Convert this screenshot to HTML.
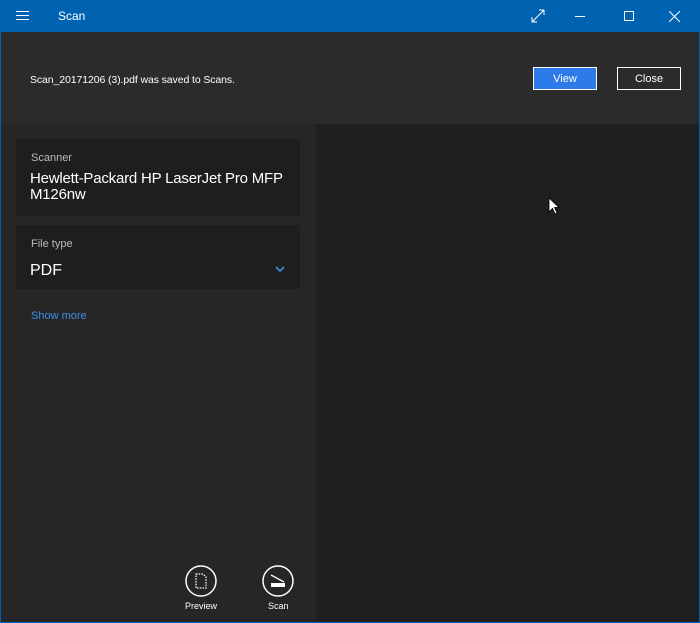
<!DOCTYPE html>
<html><head><style>
*{margin:0;padding:0;box-sizing:border-box}
body{width:700px;height:623px;overflow:hidden;background:#0063b1;font-family:"Liberation Sans",sans-serif;position:relative}
.t{position:absolute;color:#fff;white-space:nowrap;line-height:1.2}
</style></head><body>
<div style="position:absolute;left:0;top:0;width:700px;height:32px;background:#0063b1"></div>
<svg style="position:absolute;left:16px;top:10px" width="14" height="12"><path d="M0 1.5H13M0 5.5H13M0 9.5H13" stroke="#fff" stroke-width="1"/></svg>
<div class="t" style="left:58px;top:9px;font-size:12px">Scan</div>
<svg style="position:absolute;left:530px;top:8px" width="16" height="16"><path d="M2 14L14 2M2 14V9M2 14H7M14 2H9M14 2V7" stroke="#fff" stroke-width="1" fill="none"/></svg>
<div style="position:absolute;left:575px;top:16px;width:10px;height:1px;background:#fff"></div>
<div style="position:absolute;left:624px;top:11px;width:10px;height:10px;border:1px solid #fff"></div>
<svg style="position:absolute;left:669px;top:11px" width="11" height="11"><path d="M0 0L11 11M11 0L0 11" stroke="#fff" stroke-width="1"/></svg>
<div style="position:absolute;left:1px;top:32px;width:698px;height:590px;background:#1f1f1f"></div>
<div style="position:absolute;left:1px;top:32px;width:698px;height:92px;background:#2b2b2b"></div>
<div class="t" style="left:30px;top:74px;font-size:10.5px;letter-spacing:-0.1px">Scan_20171206 (3).pdf was saved to Scans.</div>
<div style="position:absolute;left:533px;top:67px;width:64px;height:23px;background:#2d7be8;border:1px solid #fff;color:#fff;font-size:11px;text-align:center;line-height:22px">View</div>
<div style="position:absolute;left:617px;top:67px;width:64px;height:23px;background:#2b2b2b;border:1px solid #fff;color:#fff;font-size:11px;text-align:center;line-height:22px">Close</div>
<div style="position:absolute;left:1px;top:124px;width:315px;height:498px;background:#262626"></div>
<div style="position:absolute;left:16px;top:139px;width:284px;height:77px;background:#1e1e1e"></div>
<div class="t" style="left:31px;top:152px;font-size:11px;color:#bbb">Scanner</div>
<div class="t" style="left:30px;top:171px;font-size:15px;line-height:16px;letter-spacing:-0.2px">Hewlett-Packard HP LaserJet Pro MFP<br>M126nw</div>
<div style="position:absolute;left:16px;top:225px;width:284px;height:64px;background:#1e1e1e"></div>
<div class="t" style="left:31px;top:238px;font-size:11px;color:#bbb">File type</div>
<div class="t" style="left:30px;top:261px;font-size:16px">PDF</div>
<svg style="position:absolute;left:275px;top:266px" width="10" height="7"><path d="M1 1L5 5L9 1" stroke="#3d8ee8" stroke-width="1.6" fill="none"/></svg>
<div class="t" style="left:31px;top:310px;font-size:11px;color:#3d8ee8">Show more</div>
<svg style="position:absolute;left:185px;top:565px" width="32" height="32"><circle cx="16" cy="16" r="15" stroke="#fff" stroke-width="1.5" fill="none"/><path d="M11 9H18L21 12V23H11Z" stroke="#fff" stroke-width="1.3" stroke-dasharray="1.5 1.2" fill="none"/></svg>
<div class="t" style="left:185px;top:601px;font-size:9px">Preview</div>
<svg style="position:absolute;left:262px;top:565px" width="32" height="32"><circle cx="16" cy="16" r="15" stroke="#fff" stroke-width="1.5" fill="none"/><path d="M9 10L22 17" stroke="#fff" stroke-width="1.3"/><rect x="9" y="18" width="14" height="4" fill="#fff"/></svg>
<div class="t" style="left:268px;top:601px;font-size:9px">Scan</div>
<svg style="position:absolute;left:548px;top:197px" width="12" height="18"><path d="M1 1V15L4.5 11.5L7 17L9 16L6.5 10.5H11Z" fill="#fff" stroke="#000" stroke-width="0.8"/></svg>
</body></html>
